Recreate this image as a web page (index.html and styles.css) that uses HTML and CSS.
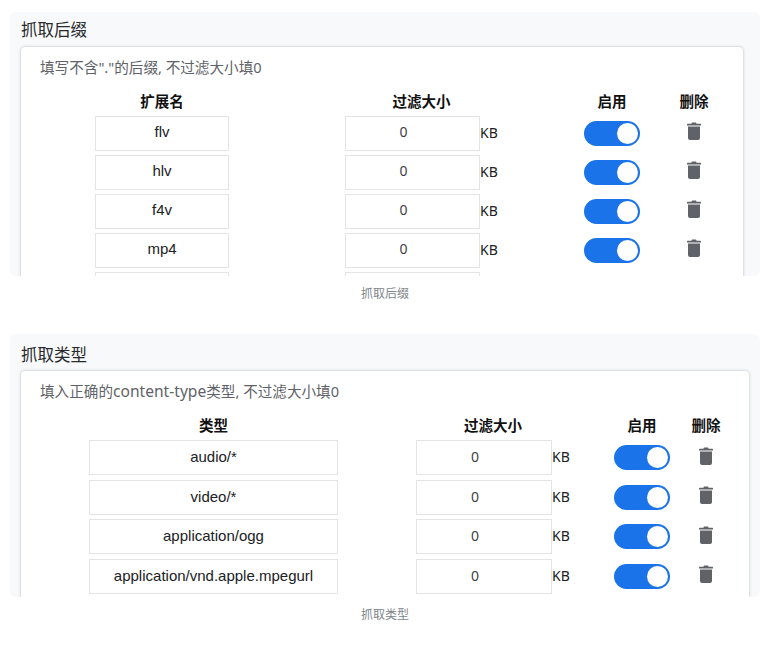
FILE: index.html
```html
<!DOCTYPE html>
<html lang="zh-CN">
<head>
<meta charset="utf-8">
<title>抓取设置</title>
<link rel="stylesheet" href="styles.css">
</head>
<body>
<svg class="defs" width="0" height="0" aria-hidden="true">
  <symbol id="trash" viewBox="0 0 14 18">
    <path d="M5 0.6h4l0.6 1.2H13.4a0.6 0.6 0 0 1 0.6 0.6V3.4H0V2.4a0.6 0.6 0 0 1 0.6-0.6H4.4z"/>
    <path d="M1 4.6h12V16a2 2 0 0 1-2 2H3a2 2 0 0 1-2-2z"/>
  </symbol>
</svg>

<div class="block block-ext">
  <section class="panel">
    <h2 class="panel-title">抓取后缀</h2>
    <div class="card">
      <p class="hint">填写不含"."的后缀, 不过滤大小填0</p>
      <div class="grid">
        <div class="head">扩展名</div><div class="head">过滤大小</div><div class="head">启用</div><div class="head">删除</div>

        <div class="field name">flv</div>
        <div class="size"><div class="field num">0</div><span class="unit">KB</span></div>
        <div class="toggle"></div>
        <svg class="del"><use href="#trash"/></svg>

        <div class="field name">hlv</div>
        <div class="size"><div class="field num">0</div><span class="unit">KB</span></div>
        <div class="toggle"></div>
        <svg class="del"><use href="#trash"/></svg>

        <div class="field name">f4v</div>
        <div class="size"><div class="field num">0</div><span class="unit">KB</span></div>
        <div class="toggle"></div>
        <svg class="del"><use href="#trash"/></svg>

        <div class="field name">mp4</div>
        <div class="size"><div class="field num">0</div><span class="unit">KB</span></div>
        <div class="toggle"></div>
        <svg class="del"><use href="#trash"/></svg>

        <div class="field name"></div>
        <div class="size"><div class="field num"></div><span class="unit"></span></div>
      </div>
    </div>
  </section>
  <div class="caption">抓取后缀</div>
</div>

<div class="block block-type">
  <section class="panel">
    <h2 class="panel-title">抓取类型</h2>
    <div class="card">
      <p class="hint">填入正确的<span class="hint-latin">content-type</span>类型, 不过滤大小填0</p>
      <div class="grid">
        <div class="head">类型</div><div class="head">过滤大小</div><div class="head">启用</div><div class="head">删除</div>

        <div class="field name">audio/*</div>
        <div class="size"><div class="field num">0</div><span class="unit">KB</span></div>
        <div class="toggle"></div>
        <svg class="del"><use href="#trash"/></svg>

        <div class="field name">video/*</div>
        <div class="size"><div class="field num">0</div><span class="unit">KB</span></div>
        <div class="toggle"></div>
        <svg class="del"><use href="#trash"/></svg>

        <div class="field name">application/ogg</div>
        <div class="size"><div class="field num">0</div><span class="unit">KB</span></div>
        <div class="toggle"></div>
        <svg class="del"><use href="#trash"/></svg>

        <div class="field name">application/vnd.apple.mpegurl</div>
        <div class="size"><div class="field num">0</div><span class="unit">KB</span></div>
        <div class="toggle"></div>
        <svg class="del"><use href="#trash"/></svg>
      </div>
    </div>
  </section>
  <div class="caption">抓取类型</div>
</div>
</body>
</html>
```
FILE: styles.css
```css
* { box-sizing: border-box; }
html, body { margin: 0; background: #fff; }
body {
  padding: 12px 21px 0 10px;
  font-family: "Liberation Sans", "Noto Sans CJK SC", sans-serif;
  color: #202124;
  overflow: hidden;
}
.defs { position: absolute; }

.block-ext { margin-bottom: 31px; }
.block-ext .panel { height: 264px; }
.block-type .panel { height: 263px; }
.block-ext .card { margin-right: 17px; }
.block-type .card { margin-right: 11px; }

.panel {
  background: #f8f9fa;
  border-radius: 6px;
  padding: 8px 0 0 11px;
  overflow: hidden;
}
.panel-title {
  margin: 0 0 6px;
  font-size: 16.5px;
  font-weight: 400;
  line-height: 21px;
  color: #26282b;
}
.block-type .panel-title { margin-bottom: 5px; }
.block-type .panel { padding-top: 11px; }

.card {
  background: #fff;
  border-radius: 4px;
  padding: 10px 0 0 19px;
  box-shadow: 0 0 3px rgba(60, 64, 67, .35);
  height: 300px;
}
.hint {
  margin: 0 0 15px;
  font-family: "Noto Sans", "Noto Sans CJK SC", sans-serif;
  font-size: 14.6px;
  line-height: 20px;
  color: #5f6368;
}
.hint-latin { font-size: 15.6px; }

.grid {
  display: grid;
  justify-items: center;
  align-items: center;
  row-gap: 5px;
  grid-template-rows: 19px;
  grid-auto-rows: 34px;
}
.block-ext .grid { grid-template-columns: 244px 275px 106px 58px; }
.block-type .grid { grid-template-columns: 347px 212px 86px 42px; row-gap: 5.5px; }
.block-type .field { line-height: 32px; }

.head {
  align-self: end;
  font-size: 14.5px;
  line-height: 17px;
  font-weight: 700;
  color: #111;
  white-space: nowrap;
}

.field {
  height: 35px;
  border: 1px solid #e3e4e6;
  background: #fff;
  font-size: 15px;
  line-height: 30px;
  text-align: center;
  color: #202124;
}
.block-ext .name { width: 134px; }
.block-type .name { width: 249px; }
.block-ext .num { width: 135px; }
.block-type .num { width: 136px; }
.num { padding-right: 18px; font-family: "Noto Sans", sans-serif; font-size: 14px; color: #3c4043; }

.size { display: flex; align-items: center; }
.unit {
  width: 18px;
  margin-bottom: 2px;
  font-family: "Noto Sans", sans-serif;
  font-size: 14px;
  color: #202124;
}

.toggle {
  position: relative;
  width: 56px;
  height: 25px;
  border-radius: 13px;
  background: #1a73e8;
}
.toggle::after {
  content: "";
  position: absolute;
  top: 2px;
  right: 2px;
  width: 21px;
  height: 21px;
  border-radius: 50%;
  background: #fff;
}
.del { width: 14px; height: 18px; margin-bottom: 4px; fill: #5f6368; }

.caption {
  margin-top: 9px;
  text-align: center;
  font-size: 12px;
  line-height: 18px;
  color: #80868b;
}
```
